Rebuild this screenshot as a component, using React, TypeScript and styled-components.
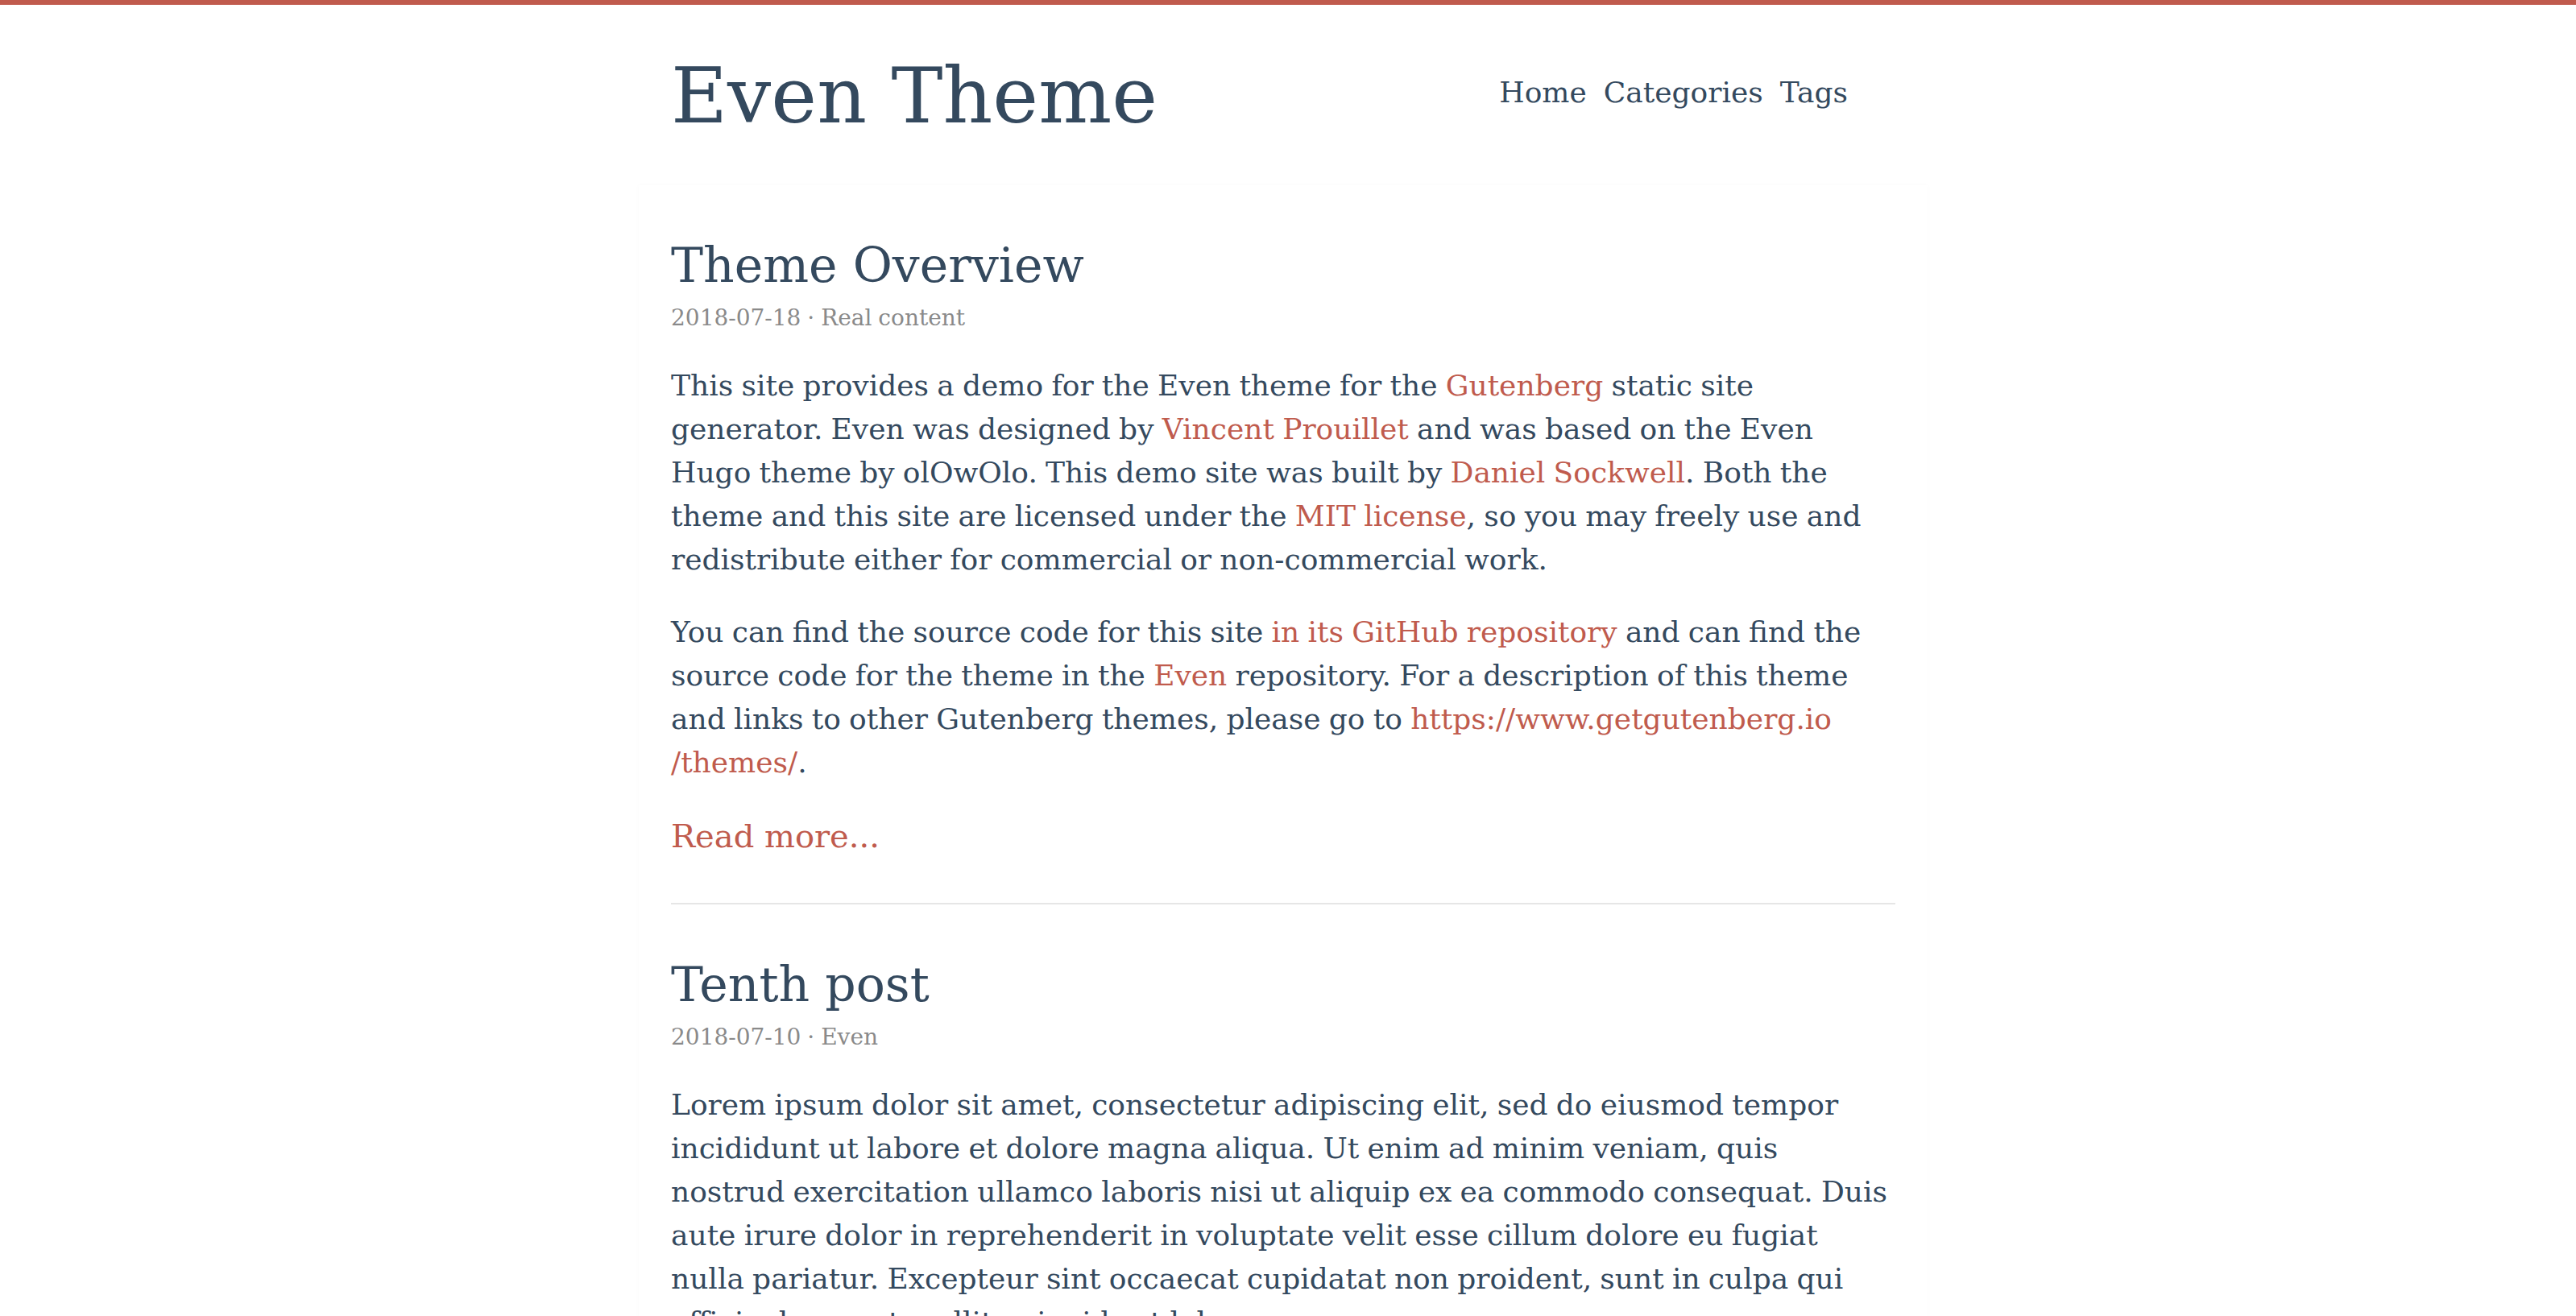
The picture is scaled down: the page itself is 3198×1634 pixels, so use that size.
import React from 'react';
import styled, { createGlobalStyle } from 'styled-components';

const GlobalStyle = createGlobalStyle`
    html, body {
        margin: 0;
        padding: 0;
        background: #fff;
    }
    body {
        border-top: 6px solid #c05b4d;
        font-family: "DejaVu Serif", "Liberation Serif", serif;
        color: #34495e;
    }
`;

const Page = styled.div`
    padding-right: 12px;
`;

const Container = styled.div`
    width: 1600px;
    margin: 0 auto;
`;

const Header = styled.header`
    display: flex;
    justify-content: space-between;
    align-items: flex-start;
    height: 224px;
    padding: 0 40px;
    box-sizing: border-box;
`;

const Logo = styled.a`
    margin-top: 65px;
    font-size: 96px;
    line-height: 1;
    color: #34495e;
    text-decoration: none;
`;

const Nav = styled.nav`
    display: flex;
    gap: 21px;
    margin-top: 91px;
    padding-right: 59px;
`;

const NavItem = styled.a`
    font-size: 36px;
    line-height: 1;
    color: #34495e;
    text-decoration: none;
`;

const Main = styled.main`
    padding: 63px 40px 0;
    min-height: 1404px;
    box-shadow: 0 0 6px rgba(0, 0, 0, 0.025);
`;

const Post = styled.article`
    padding-bottom: 53px;
    border-bottom: 2px solid #e6e6e6;
    margin-bottom: 63px;

    &:last-child {
        border-bottom: none;
    }
`;

const PostTitle = styled.h1`
    margin: 0;
    font-size: 60px;
    line-height: 72px;
    font-weight: normal;
    color: #34495e;
`;

const PostMeta = styled.div`
    margin-top: 10px;
    font-size: 28px;
    line-height: 40px;
    word-spacing: -1px;
    color: #8a8a8a;
`;

const Content = styled.div`
    margin-top: 37px;
`;

const Paragraph = styled.p`
    margin: 0 0 36px;
    font-size: 36px;
    line-height: 54px;
    word-spacing: -1.2px;

    &:last-child {
        margin-bottom: 0;
    }
`;

const Link = styled.a`
    color: #c05b4d;
    text-decoration: none;
`;

const ReadMore = styled.a`
    display: block;
    margin-top: 34px;
    font-size: 40px;
    line-height: 60px;
    color: #c05b4d;
    text-decoration: none;
`;

export default function App() {
    return (
        <Page>
            <GlobalStyle />
            <Container>
                <Header>
                    <Logo href="#">Even Theme</Logo>
                    <Nav>
                        <NavItem href="#">Home</NavItem>
                        <NavItem href="#">Categories</NavItem>
                        <NavItem href="#">Tags</NavItem>
                    </Nav>
                </Header>
                <Main>
                    <Post>
                        <PostTitle>Theme Overview</PostTitle>
                        <PostMeta>2018-07-18 · Real content</PostMeta>
                        <Content>
                            <Paragraph>
                                This site provides a demo for the Even theme for the <Link href="#">Gutenberg</Link> static site
                                generator. Even was designed by <Link href="#">Vincent Prouillet</Link> and was based on the Even
                                Hugo theme by olOwOlo. This demo site was built by <Link href="#">Daniel Sockwell</Link>. Both the
                                theme and this site are licensed under the <Link href="#">MIT license</Link>, so you may freely use and
                                redistribute either for commercial or non-commercial work.
                            </Paragraph>
                            <Paragraph>
                                You can find the source code for this site <Link href="#">in its GitHub repository</Link> and can find the
                                source code for the theme in the <Link href="#">Even</Link> repository. For a description of this theme
                                and links to other Gutenberg themes, please go to <Link href="#">https://www.getgutenberg.io<wbr />/themes/</Link>.
                            </Paragraph>
                        </Content>
                        <ReadMore href="#">Read more...</ReadMore>
                    </Post>
                    <Post>
                        <PostTitle>Tenth post</PostTitle>
                        <PostMeta>2018-07-10 · Even</PostMeta>
                        <Content>
                            <Paragraph>
                                Lorem ipsum dolor sit amet, consectetur adipiscing elit, sed do eiusmod tempor
                                incididunt ut labore et dolore magna aliqua. Ut enim ad minim veniam, quis
                                nostrud exercitation ullamco laboris nisi ut aliquip ex ea commodo consequat. Duis
                                aute irure dolor in reprehenderit in voluptate velit esse cillum dolore eu fugiat
                                nulla pariatur. Excepteur sint occaecat cupidatat non proident, sunt in culpa qui
                                officia deserunt mollit anim id est laborum.
                            </Paragraph>
                        </Content>
                    </Post>
                </Main>
            </Container>
        </Page>
    );
}
